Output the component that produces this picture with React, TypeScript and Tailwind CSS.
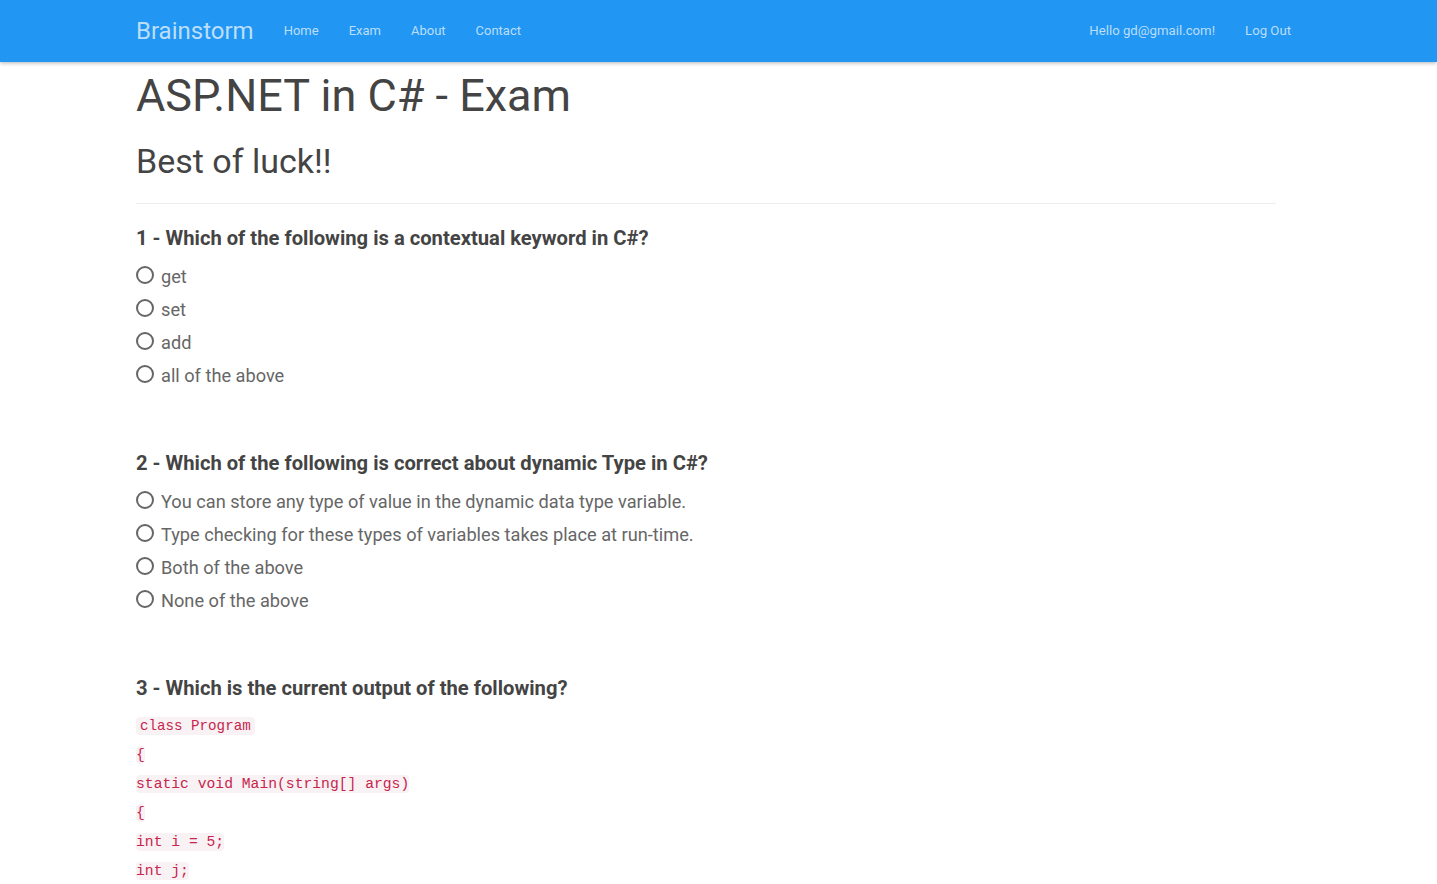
import React from "react";

const questions = [
  {
    title: "1 - Which of the following is a contextual keyword in C#?",
    options: ["get", "set", "add", "all of the above"],
  },
  {
    title: "2 - Which of the following is correct about dynamic Type in C#?",
    options: [
      "You can store any type of value in the dynamic data type variable.",
      "Type checking for these types of variables takes place at run-time.",
      "Both of the above",
      "None of the above",
    ],
  },
];

const codeLines = [
  "{",
  "static void Main(string[] args)",
  "{",
  "int i = 5;",
  "int j;",
];

const Radio: React.FC<{ label: string }> = ({ label }) => (
  <label className="flex items-center h-[33px] cursor-pointer">
    <span className="w-[18px] h-[18px] rounded-full border-2 border-[#666] -mt-[3px] shrink-0"></span>
    <span className="ml-[7px] text-[18.2px] text-[#666]">{label}</span>
  </label>
);

const App: React.FC = () => {
  return (
    <div className="min-h-screen bg-white font-['Roboto',sans-serif]">
      {/* Navbar */}
      <nav className="h-[62px] bg-[#2196f3] shadow-[0_1px_4px_rgba(0,0,0,0.3)] relative z-10">
        <div className="ml-[136px] w-[1170px] h-full flex items-center">
          <a className="text-[24px] text-[#bbdefb] pr-[15px]">Brainstorm</a>
          <ul className="flex text-[13px] text-[#bbdefb]">
            <li className="px-[15px]">Home</li>
            <li className="px-[15px]">Exam</li>
            <li className="px-[15px]">About</li>
            <li className="px-[15px]">Contact</li>
          </ul>
          <ul className="flex ml-auto text-[13.2px] text-[#bbdefb]">
            <li className="px-[15px]">Hello gd@gmail.com!</li>
            <li className="px-[15px]">Log Out</li>
          </ul>
        </div>
      </nav>

      <main className="ml-[136px] w-[1140px]">
        <h1 className="mt-[8px] text-[45px] leading-[52px] text-[#444]">ASP.NET in C# - Exam</h1>
        <h3 className="mt-[19px] text-[34px] leading-[40px] text-[#444]">Best of luck!!</h3>
        <hr className="mt-[22px] border-t border-[#eee]" />

        {questions.map((q, i) => (
          <section key={i} className={i === 0 ? "mt-[22px]" : "mt-[59px]"}>
            <h4 className="text-[20.2px] leading-[24px] font-bold text-[#444]">{q.title}</h4>
            <div className="mt-[10px]">
              {q.options.map((o) => (
                <Radio key={o} label={o} />
              ))}
            </div>
          </section>
        ))}

        <section className="mt-[59px]">
          <h4 className="text-[20.2px] leading-[24px] font-bold text-[#444]">
            3 - Which is the current output of the following?
          </h4>
          <div className="mt-[11px] font-['DejaVu_Sans_Mono',monospace]">
            <div className="h-[29px] flex items-center">
              <code className="bg-[#f9f2f4] text-[#c7254e] rounded px-[4px] text-[14.2px] leading-[18px] whitespace-pre">
                class Program
              </code>
            </div>
            {codeLines.map((l, i) => (
              <div key={i} className="h-[29px] flex items-center">
                <code className="bg-[#f9f2f4] text-[#c7254e] rounded-sm text-[14.7px] leading-[18px] whitespace-pre">
                  {l}
                </code>
              </div>
            ))}
          </div>
        </section>
      </main>
    </div>
  );
};

export default App;
